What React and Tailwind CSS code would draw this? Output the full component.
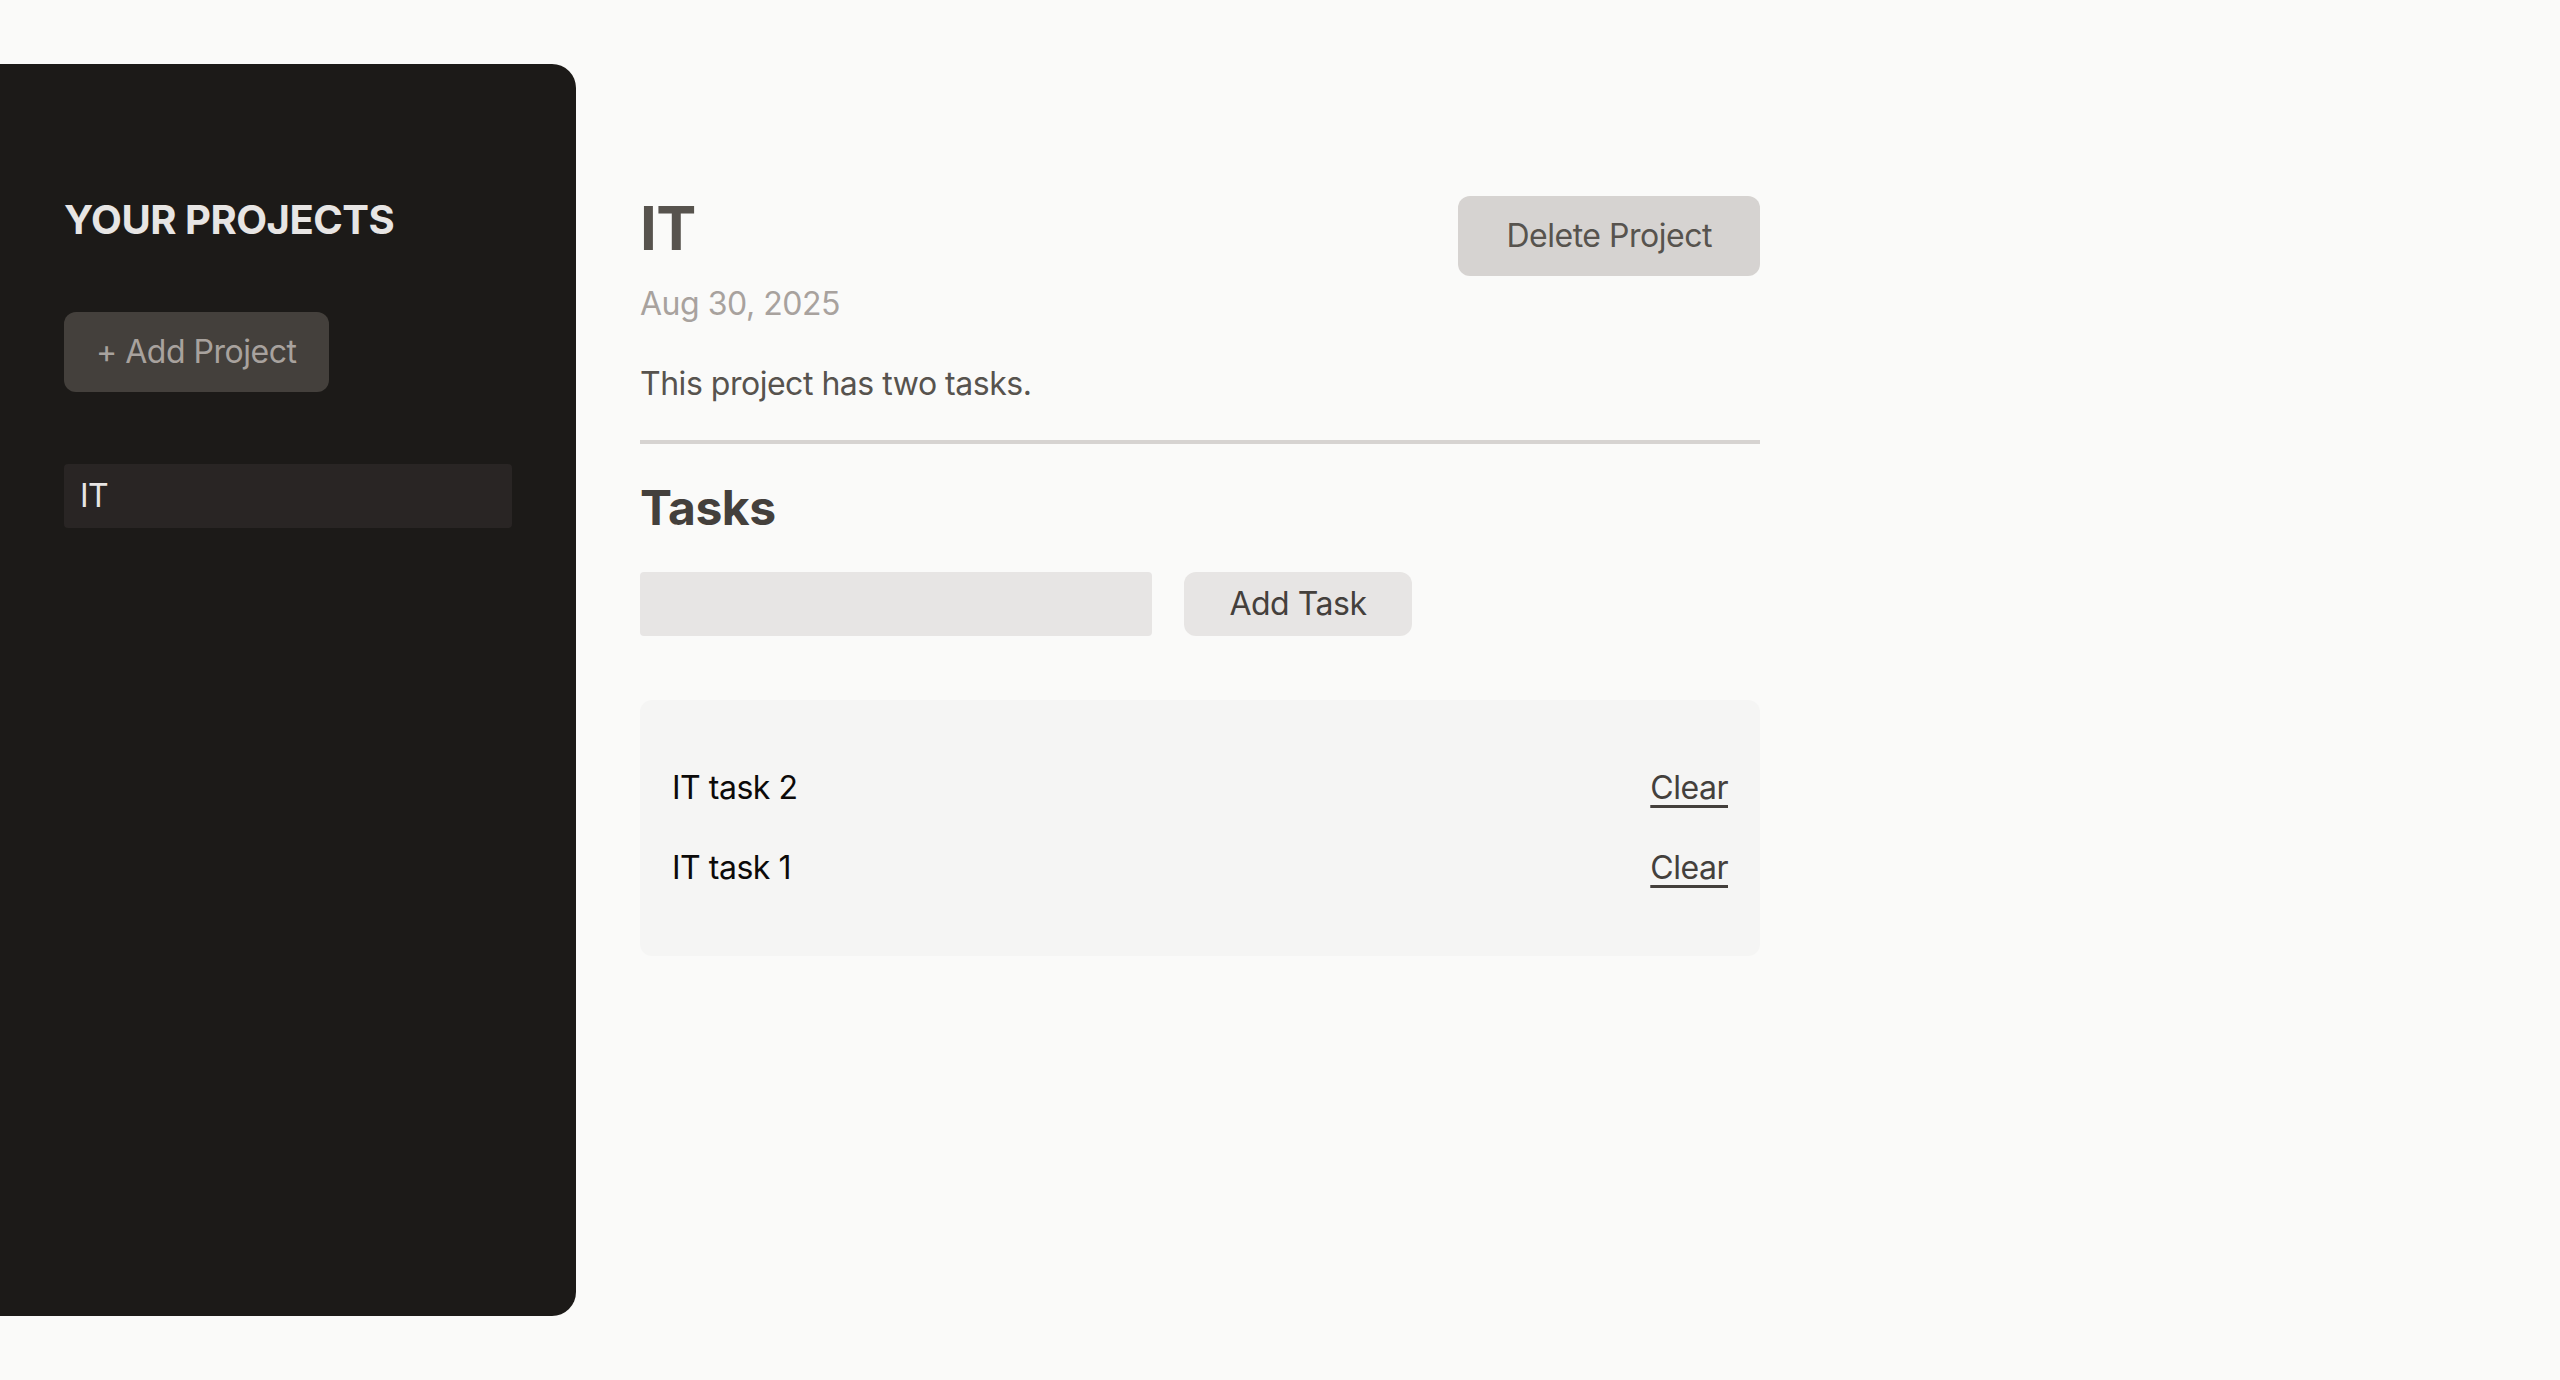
import React, { useState } from "react";

export default function App() {
  const [tasks] = useState([
    { id: 2, text: "IT task 2" },
    { id: 1, text: "IT task 1" },
  ]);
  const [entered, setEntered] = useState("");

  return (
    <div className="h-screen py-16 flex gap-16 bg-[#fafaf9] tracking-[-0.03em] font-['Inter','Noto_Sans',sans-serif]">
      {/* Sidebar */}
      <aside className="w-[576px] h-full px-16 py-32 bg-[#1c1a18] text-[#e7e5e4] rounded-r-3xl">
        <h2 className="mb-16 text-[40px] leading-[56px] font-bold uppercase text-[#e7e5e4]">
          Your Projects
        </h2>
        <div>
          <button className="px-8 py-4 text-[32px] leading-[48px] rounded-xl bg-[#44403c] text-[#a8a29e]">
            + Add Project
          </button>
        </div>
        <ul className="mt-[72px]">
          <li>
            <button className="w-full text-left px-4 py-2 text-[32px] leading-[48px] rounded-[4px] bg-[#292524] text-[#e7e5e4]">
              IT
            </button>
          </li>
        </ul>
      </aside>

      {/* Project details */}
      <div className="w-[1120px] mt-32">
        <header className="pb-8 mb-8 border-b-4 border-[#d6d3d1]">
          <div className="flex items-start justify-between">
            <h1 className="text-[60px] leading-[72px] font-bold text-[#57534e] mb-4">IT</h1>
            <button className="mt-1 px-12 py-4 text-[32px] leading-[48px] rounded-xl bg-[#d6d3d1] text-[#57534e]">
              Delete Project
            </button>
          </div>
          <p className="mb-8 text-[32px] leading-[48px] text-[#a8a29e]">Aug 30, 2025</p>
          <p className="text-[32px] leading-[48px] text-[#57534e] whitespace-pre-wrap">
            This project has two tasks.
          </p>
        </header>

        <section>
          <h2 className="mb-8 text-[48px] leading-[64px] font-bold text-[#44403c]">Tasks</h2>
          <div className="flex items-center gap-8">
            <input
              type="text"
              value={entered}
              onChange={(e) => setEntered(e.target.value)}
              className="w-[512px] h-16 px-4 rounded-[4px] bg-[#e7e5e4] text-[32px] outline-none"
            />
            <button className="w-[228px] h-16 rounded-xl bg-[#e7e5e4] text-[32px] leading-[48px] text-[#44403c]">
              Add Task
            </button>
          </div>
          <ul className="mt-16 p-8 rounded-xl bg-[#f5f5f4]">
            {tasks.map((task) => (
              <li key={task.id} className="flex justify-between my-8">
                <span className="text-[32px] leading-[48px] text-[#0c0a09]">{task.text}</span>
                <button className="text-[32px] leading-[48px] text-[#44403c] underline underline-offset-[6px] decoration-[3px]">
                  Clear
                </button>
              </li>
            ))}
          </ul>
        </section>
      </div>
    </div>
  );
}
